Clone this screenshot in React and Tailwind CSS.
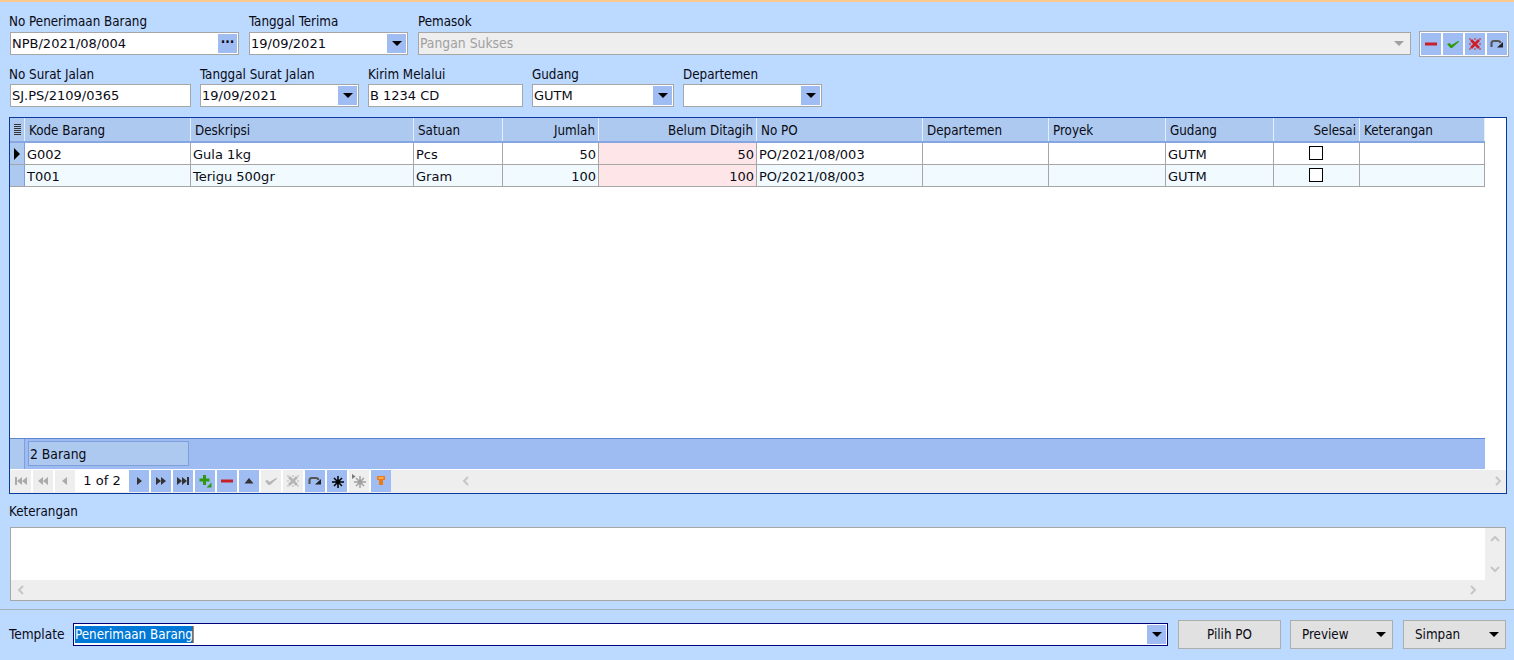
import React from 'react'

const columns = [
  { label: 'Kode Barang', width: 'w-[166px]' },
  { label: 'Deskripsi', width: 'w-[223px]' },
  { label: 'Satuan', width: 'w-[89px]' },
  { label: 'Jumlah', width: 'w-[96px]', right: true },
  { label: 'Belum Ditagih', width: 'w-[158px]', right: true, pink: true },
  { label: 'No PO', width: 'w-[166px]' },
  { label: 'Departemen', width: 'w-[126px]' },
  { label: 'Proyek', width: 'w-[117px]' },
  { label: 'Gudang', width: 'w-[108px]' },
  { label: 'Selesai', width: 'w-[86px]', right: true, check: true },
  { label: 'Keterangan', width: 'w-[125px]' },
]

const rows = [
  ['G002', 'Gula 1kg', 'Pcs', '50', '50', 'PO/2021/08/003', '', '', 'GUTM', '', ''],
  ['T001', 'Terigu 500gr', 'Gram', '100', '100', 'PO/2021/08/003', '', '', 'GUTM', '', ''],
]

function Arrow({ className = 'border-t-black' }) {
  return <span className={`w-0 h-0 border-x-[5px] border-x-transparent border-t-[5px] ${className}`} />
}

function Field({ label, value, width, kind, low }) {
  return (
    <div className={`flex flex-col ${width}`}>
      <label className={`h-[19px] whitespace-nowrap ${low ? 'leading-[20px]' : 'leading-[18px]'}`}>{label}</label>
      <div className="h-[23px] flex items-center border border-[#a6a6a6] bg-white px-[1px]">
        <span className="flex-1 leading-[19px] whitespace-nowrap overflow-hidden [font-stretch:normal] text-[13px]">{value}</span>
        {kind === 'dots' && <span className="w-[19px] h-[19px] bg-[#a0bdf3] flex items-center justify-center font-bold leading-none pb-[2px]">···</span>}
        {kind === 'drop' && <span className="w-[19px] h-[19px] bg-[#a0bdf3] flex items-center justify-center"><Arrow /></span>}
      </div>
    </div>
  )
}

function ToolBtn({ active, children }) {
  return (
    <span className={`w-5 h-[22px] flex items-center justify-center ${active ? 'bg-[#a0bdf3]' : 'bg-[#eeeeee]'}`}>
      {children}
    </span>
  )
}

const Svg = ({ children, size = 14 }) => (
  <svg width={size} height={size} viewBox="0 0 14 14">{children}</svg>
)
const Minus = () => <Svg><rect x="1" y="5.5" width="12" height="3" fill="#c8202a" /></Svg>
const Check = ({ color = '#2f9a10' }) => <Svg><path d="M1 7 L3.5 6 L5.5 8 L12.5 3.8 L13 4.8 L6 11 H4.5 Z" fill={color} /></Svg>
const Cross = ({ color = '#cc1f2a' }) => (
  <Svg><path d="M3 3 L11 11 M11 3 L3 11" stroke={color} strokeWidth="2.8" /><path d="M7 1 V3 M7 11 V13 M1 7 H3 M11 7 H13 M2 1 V3 M12 1 V3 M2 11 V13 M12 11 V13" stroke={color} strokeWidth="1" /></Svg>
)
const Redo = () => (
  <Svg><path d="M1.5 10 V6.5 Q1.5 4 4 4 H8 Q10 4 10.5 6" fill="none" stroke="#555" strokeWidth="2.2" /><path d="M7 10.5 H13 V5 Z" fill="#222" /></Svg>
)
const Tri = ({ dir = 'right', color = '#333', n = 1, bar }) => (
  <Svg>
    {bar === 'left' && <rect x="1" y="3" width="2" height="8" fill={color} />}
    {bar === 'right' && <rect x="11" y="3" width="2" height="8" fill={color} />}
    {n === 1 && <path d={dir === 'right' ? 'M5 3 L10 7 L5 11 Z' : 'M9 3 L4 7 L9 11 Z'} fill={color} />}
    {n === 2 && !bar && <path d={dir === 'right' ? 'M2 3 L7 7 L2 11 Z M7 3 L12 7 L7 11 Z' : 'M12 3 L7 7 L12 11 Z M7 3 L2 7 L7 11 Z'} fill={color} />}
    {n === 2 && bar === 'left' && <path d="M13 3 L8 7 L13 11 Z M8 3 L3 7 L8 11 Z" fill={color} />}
    {n === 2 && bar === 'right' && <path d="M1 3 L6 7 L1 11 Z M6 3 L11 7 L6 11 Z" fill={color} />}
  </Svg>
)
const Star = ({ color = '#000', flag }) => (
  <Svg>
    <path d="M8 2 V14 M2 8 H14 M4 4 L12 12 M12 4 L4 12" stroke={color} strokeWidth="1.5" />
    <circle cx="8" cy="8" r="2.4" fill={color} />
    {flag && <path d="M0 0 L3.5 2.5 L0 5 Z" fill="#777" />}
  </Svg>
)
const ScrollChev = ({ d }) => (
  <svg width="12" height="12" viewBox="0 0 12 12"><path d={d} fill="none" stroke="#c6c6c6" strokeWidth="2" /></svg>
)

function GridHead() {
  return (
    <div className="flex h-[25px] bg-[#adc9ef] border-b-2 border-[#86a6e2]">
      <div className="w-[15px] flex flex-col items-center justify-center gap-[1px] border-r border-[#e4eefc]">
        {[0, 1, 2, 3, 4, 5].map((i) => <span key={i} className="w-[7px] h-[1px] bg-[#333]" />)}
      </div>
      {columns.map((c) => (
        <div key={c.label} className={`${c.width} flex items-center pl-[4px] pr-[3px] pt-[3px] border-r border-[#e4eefc] ${c.right ? 'justify-end' : ''}`}>
          <span className="whitespace-nowrap">{c.label}</span>
        </div>
      ))}
    </div>
  )
}

function GridRow({ row, index }) {
  const bg = index % 2 ? 'bg-[#f0faff]' : 'bg-white'
  return (
    <div className={`flex h-[22px] border-b border-[#a6a6a6] ${bg}`}>
      <div className="w-[15px] bg-[#adc9ef] border-r border-[#7f9fdc] flex items-center justify-center">
        {index === 0 && <span className="w-0 h-0 border-y-[6px] border-y-transparent border-l-[6px] border-l-black" />}
      </div>
      {columns.map((c, i) => (
        <div key={c.label} className={`${c.width} flex items-center pl-[2px] border-r border-[#a6a6a6] ${c.right ? 'justify-end' : ''} ${c.pink ? 'bg-[#fee5e8]' : ''} ${c.check ? 'pr-[36px] pb-[2px]' : 'pr-[2px] pt-[2px]'}`}>
          {c.check
            ? <span className="w-[14px] h-[14px] border border-black bg-white" />
            : <span className="whitespace-nowrap [font-stretch:normal] text-[13px]">{row[i]}</span>}
        </div>
      ))}
    </div>
  )
}

function DropBtn({ label, className }) {
  return (
    <button className={`w-[103px] h-[29px] bg-[#e1e1e1] border border-[#adadad] flex items-center justify-between pl-[11px] pr-[6px] ${className}`}>
      <span>{label}</span>
      <Arrow />
    </button>
  )
}

export default function App() {
  return (
    <div className="w-[1514px] h-[660px] overflow-hidden flex flex-col bg-[#bcd9ff] border-t-2 border-[#fdc98a] text-[13.3px] [font-stretch:condensed] text-[#0a0a14] font-['DejaVu_Sans',sans-serif]">
      {/* Header fields */}
      <div className="flex pt-[11px] pl-[9px] gap-[10px] items-end">
        <Field label="No Penerimaan Barang" value="NPB/2021/08/004" width="w-[230px] [&>div]:ml-[1px]" kind="dots" />
        <Field label="Tanggal Terima" value="19/09/2021" width="w-[159px]" kind="drop" />
        <div className="flex flex-col w-[993px]">
          <label className="h-[19px] leading-[18px]">Pemasok</label>
          <div className="h-[23px] flex items-center border border-[#a6a6a6] bg-[#eeeeee] pl-[1px] pr-[6px] text-[#a0a0a0] text-[13.8px]">
            <span className="flex-1 leading-none">Pangan Sukses</span>
            <Arrow className="border-t-[#a0a0a0]" />
          </div>
        </div>
        <div className="ml-[-2px] flex gap-[2px] border border-[#a6a6a6] bg-white p-[1px] mb-[-2px]">
          <ToolBtn active><Minus /></ToolBtn>
          <ToolBtn active><Check /></ToolBtn>
          <ToolBtn active><Cross /></ToolBtn>
          <ToolBtn active><Redo /></ToolBtn>
        </div>
      </div>

      <div className="flex pt-[10px] pl-[9px] gap-[9px]">
        <Field low label="No Surat Jalan" value="SJ.PS/2109/0365" width="w-[182px] [&>div]:ml-[1px]" />
        <Field low label="Tanggal Surat Jalan" value="19/09/2021" width="w-[159px]" kind="drop" />
        <Field low label="Kirim Melalui" value="B 1234 CD" width="w-[155px]" />
        <Field low label="Gudang" value="GUTM" width="w-[142px]" kind="drop" />
        <Field low label="Departemen" value="" width="w-[139px]" kind="drop" />
      </div>

      {/* Detail grid */}
      <div className="mt-[10px] ml-[9px] w-[1498px] h-[377px] border border-[#0b3a9e] bg-white flex flex-col">
        <div className="w-[1475px] flex-1 flex flex-col">
          <GridHead />
          {rows.map((row, i) => <GridRow key={row[0]} row={row} index={i} />)}
          <div className="flex-1" />
          <div className="h-[31px] flex bg-[#9fbcf2] border-t border-[#5f86d0]">
            <div className="w-[15px] bg-[#adc9ef] border-r border-[#7f9fdc]" />
            <div className="ml-[3px] mt-[2px] w-[161px] h-[25px] bg-[#adc9ef] border border-[#7f9fdc] flex items-center pl-[1px] pt-[1px] text-[13.8px]">2 Barang</div>
          </div>
        </div>
        <div className="h-[24px] flex items-start bg-[#eeeeee] pl-[1px] pt-[1px] shadow-[inset_0_1px_0_#ffffff]">
          <div className="flex gap-[2px] items-center bg-white">
            <ToolBtn><Tri dir="left" n={2} color="#aaa" bar="left" /></ToolBtn>
            <ToolBtn><Tri dir="left" n={2} color="#aaa" /></ToolBtn>
            <ToolBtn><Tri dir="left" color="#aaa" /></ToolBtn>
            <span className="w-[50px] h-[22px] flex items-center justify-center bg-white [font-stretch:normal] text-[13px]">1 of 2</span>
            <ToolBtn active><Tri /></ToolBtn>
            <ToolBtn active><Tri n={2} /></ToolBtn>
            <ToolBtn active><Tri n={2} bar="right" /></ToolBtn>
            <ToolBtn active>
              <Svg><path d="M5 1 H8 V4.5 H11.5 V7.5 H8 V11 H5 V7.5 H1.5 V4.5 H5 Z" fill="#2f9a10" /><path d="M13.5 8.5 V13.5 H8.5 Z" fill="#2f9a10" /></Svg>
            </ToolBtn>
            <ToolBtn active><Minus /></ToolBtn>
            <ToolBtn active><Svg><path d="M7 4 L11.5 9.5 H2.5 Z" fill="#333" /></Svg></ToolBtn>
            <ToolBtn><Check color="#b5b5b5" /></ToolBtn>
            <ToolBtn><Cross color="#b5b5b5" /></ToolBtn>
            <ToolBtn active><Redo /></ToolBtn>
            <ToolBtn active><Star /></ToolBtn>
            <ToolBtn><Star color="#a0a0a0" flag /></ToolBtn>
            <ToolBtn active><Svg><path d="M3 2 H11 V6 H9 V11 H5 V6 H3 Z" fill="#ee7a10" /><rect x="4.5" y="3.5" width="5" height="1" fill="#ffd9a8" /></Svg></ToolBtn>
          </div>
          <div className="flex-1 h-[22px] flex justify-between px-[2px] items-center">
            <span className="ml-[67px] flex"><ScrollChev d="M8 2 L4 6 L8 10" /></span>
            <ScrollChev d="M4 2 L8 6 L4 10" />
          </div>
        </div>
      </div>

      {/* Keterangan */}
      <label className="mt-[8px] ml-[9px] h-[18px] leading-[20px]">Keterangan</label>
      <div className="mt-[7px] ml-[10px] w-[1496px] h-[74px] border border-[#a6a6a6] bg-[#eeeeee] flex flex-col">
        <div className="flex-1 flex">
          <div className="flex-1 bg-white" />
          <div className="w-[20px] flex flex-col justify-between items-center pt-[5px] pb-[5px]">
            <ScrollChev d="M2 8 L6 4 L10 8" />
            <ScrollChev d="M2 4 L6 8 L10 4" />
          </div>
        </div>
        <div className="h-[20px] flex justify-between items-center pl-[4px] pr-[26px]">
          <ScrollChev d="M8 2 L4 6 L8 10" />
          <ScrollChev d="M4 2 L8 6 L4 10" />
        </div>
      </div>

      <div className="mt-[8px] h-[1px] bg-[#a6aebb]" />

      {/* Bottom bar */}
      <div className="flex items-center mt-[10px] pl-[9px]">
        <span className="w-[64px] text-[13.6px]">Template</span>
        <div className="w-[1095px] h-[23px] flex items-center border border-[#00007a] bg-white pl-[1px] pr-[1px]">
          <span className="flex-1"><span className="bg-[#0078d7] text-white leading-[17px] inline-block border-r border-[#e07a20]">Penerimaan Barang</span></span>
          <span className="w-[19px] h-[19px] bg-[#a0bdf3] flex items-center justify-center"><Arrow /></span>
        </div>
        <button className="ml-[10px] w-[103px] h-[29px] bg-[#e1e1e1] border border-[#adadad]">Pilih PO</button>
        <DropBtn label="Preview" className="ml-[9px]" />
        <DropBtn label="Simpan" className="ml-[10px]" />
      </div>
    </div>
  )
}
